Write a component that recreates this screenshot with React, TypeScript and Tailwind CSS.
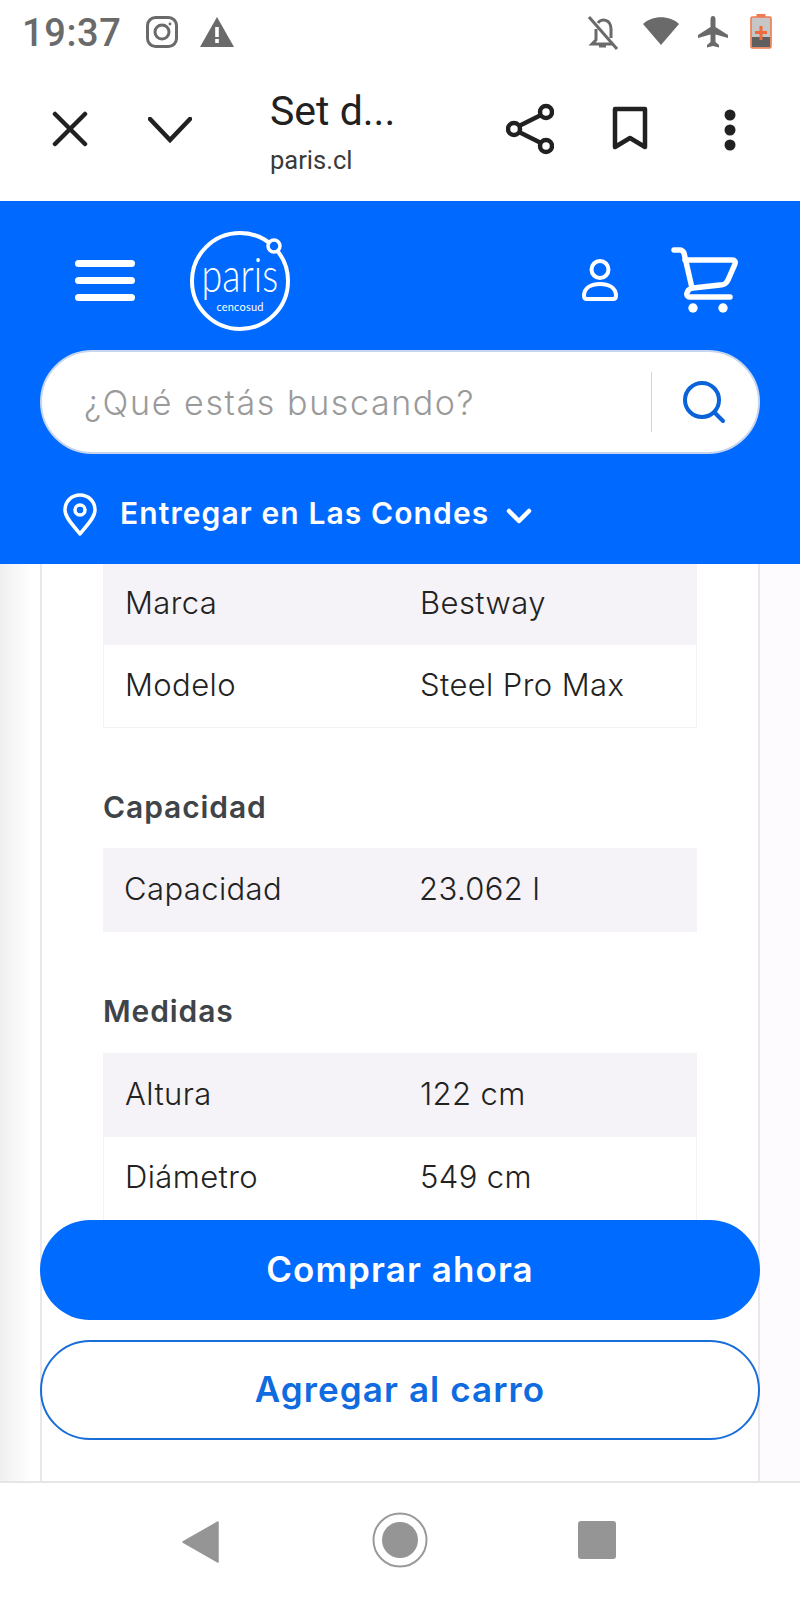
import React from "react";

const Mont = "font-['Inter','Liberation_Sans',sans-serif]";

function StatusBar() {
  return (
    <div className="h-[66px] flex items-center justify-between pl-[22px] pr-[28px] bg-white shrink-0">
      <div className="flex items-center">
        <span className="font-['Roboto',sans-serif] text-[38px] leading-none font-medium text-[#6a6a6a] tracking-[0.6px]">19:37</span>
        <svg className="ml-[24px] mt-[-3px]" width="34" height="34" viewBox="0 0 34 34" fill="none" stroke="#6a6a6a" strokeWidth="3">
          <rect x="2.5" y="2.5" width="29" height="29" rx="8" />
          <circle cx="17" cy="17" r="7" />
          <circle cx="25" cy="9" r="1.4" fill="#6a6a6a" stroke="none" />
        </svg>
        <svg className="ml-[20px] mt-[-3px]" width="36" height="32" viewBox="0 0 36 32">
          <path d="M18 1 L35 31 H1 Z" fill="#6a6a6a" />
          <rect x="16.2" y="11" width="3.6" height="10" fill="#fff" />
          <rect x="16.2" y="23" width="3.6" height="4" fill="#fff" />
        </svg>
      </div>
      <div className="flex items-center">
        <svg className="mt-[-1px]" width="34" height="36" viewBox="0 0 34 36" fill="none" stroke="#6a6a6a" strokeWidth="3">
          <path d="M10 14 V25 L6 29 H27" />
          <path d="M12 8 C15 3 25 4 25 14 V23" />
          <path d="M13 31 H20" />
          <path d="M3 2 L31 34" strokeWidth="3" />
        </svg>
        <svg className="ml-[22px] mt-[-6px]" width="38" height="32" viewBox="0 0 38 32">
          <path d="M1 10 C10 1 28 1 37 10 L19 31 Z" fill="#6a6a6a" />
        </svg>
        <svg className="ml-[17px] mt-[-1px]" width="32" height="34" viewBox="0 0 32 34">
          <path d="M16 0 C18 0 18.5 2 18.5 4 V11 L31 19 V22 L18.5 18.5 V26 L22 29 V31.5 L16 30 L10 31.5 V29 L13.5 26 V18.5 L1 22 V19 L13.5 11 V4 C13.5 2 14 0 16 0 Z" fill="#6a6a6a" />
        </svg>
        <svg className="ml-[21px] mt-[-5px]" width="22" height="36" viewBox="0 0 22 36">
          <rect x="1" y="4" width="20" height="31" rx="1.5" fill="#c6c6c6" stroke="#ef7a50" strokeWidth="1.6" />
          <rect x="6.5" y="1" width="9" height="3" fill="#ef7a50" />
          <rect x="2" y="24" width="18" height="10" fill="#5f5f5f" />
          <path d="M11 13 V27 M5 19.5 H17" stroke="#ef6a3c" strokeWidth="3" />
        </svg>
      </div>
    </div>
  );
}

function Toolbar() {
  return (
    <div className="h-[135px] flex items-center bg-white shrink-0 relative">
      <svg className="ml-[52px] mt-[-9px]" width="36" height="36" viewBox="0 0 36 36" stroke="#212121" strokeWidth="4.5" strokeLinecap="round">
        <path d="M3 3 L33 33 M33 3 L3 33" />
      </svg>
      <svg className="ml-[60px] mt-[-8px]" width="44" height="26" viewBox="0 0 44 26" fill="none" stroke="#212121" strokeWidth="4.5" strokeLinecap="round">
        <path d="M2 2 L22 23 L42 2" />
      </svg>
      <div className="ml-[78px] mt-[-6px] flex flex-col font-['Roboto',sans-serif] text-[#212121]">
        <span className="text-[41px] leading-[46px]">Set d...</span>
        <span className="text-[25.5px] leading-[28px] mt-[12px] text-[#3a3a3a]">paris.cl</span>
      </div>
      <svg className="absolute left-[506px] top-[37px]" width="48" height="52" viewBox="0 0 48 52" fill="none" stroke="#212121" strokeWidth="4.5">
        <circle cx="40" cy="9" r="6" />
        <circle cx="8" cy="26" r="6" />
        <circle cx="40" cy="43" r="6" />
        <path d="M13 23 L35 12 M13 29 L35 40" />
      </svg>
      <svg className="absolute left-[612px] top-[40px]" width="36" height="46" viewBox="0 0 36 46" fill="none" stroke="#212121" strokeWidth="4.5">
        <path d="M3 3 H33 V41 L18 32 L3 41 Z" strokeLinejoin="round" />
      </svg>
      <svg className="absolute left-[722px] top-[43px]" width="16" height="42" viewBox="0 0 16 42" fill="#212121">
        <circle cx="8" cy="6" r="5.5" />
        <circle cx="8" cy="21" r="5.5" />
        <circle cx="8" cy="36" r="5.5" />
      </svg>
    </div>
  );
}

function Logo() {
  return (
    <div className="relative w-[104px] h-[104px] text-white">
      <svg className="absolute inset-0" width="104" height="104" viewBox="0 0 104 104" fill="none" stroke="#fff">
        <circle cx="52" cy="52" r="48" strokeWidth="4" />
        <circle cx="86" cy="17" r="6" strokeWidth="3.5" fill="#0069ff" />
      </svg>
      <div className="absolute inset-0 flex flex-col items-center font-['Lato',sans-serif]">
        <span className="text-[47px] font-light leading-[46px] mt-[22px] scale-x-[0.8]">paris</span>
        <span className="text-[11px] leading-[12px] mt-[4px] tracking-[0.2px]">cencosud</span>
      </div>
    </div>
  );
}

function Header() {
  return (
    <div className={`h-[363px] bg-[#0069ff] shrink-0 flex flex-col ${Mont}`}>
      <div className="h-[149px] flex items-start relative">
        <div className="ml-[75px] mt-[59px] flex flex-col gap-[10px]">
          <div className="w-[60px] h-[7px] rounded-full bg-white" />
          <div className="w-[60px] h-[7px] rounded-full bg-white" />
          <div className="w-[60px] h-[7px] rounded-full bg-white" />
        </div>
        <div className="ml-[53px] mt-[28px]"><Logo /></div>
        <svg className="absolute left-[580px] top-[58px]" width="40" height="44" viewBox="0 0 40 44" fill="none" stroke="#fff" strokeWidth="4">
          <circle cx="20" cy="10.5" r="8.5" />
          <path d="M4 37 C4 28 12 25 20 25 C28 25 36 28 36 37 C36 39 35 40 33 40 H7 C5 40 4 39 4 37 Z" />
        </svg>
        <svg className="absolute left-[670px] top-[45px]" width="70" height="70" viewBox="0 0 70 70" fill="none" stroke="#fff" strokeWidth="5.5" strokeLinecap="round" strokeLinejoin="round">
          <path d="M4 4 H10 C12 4 13 5 14 7 L22 42 C16 44 15 51 20 51 H60" />
          <path d="M15 14 H62 C65 14 66 16 65 18 L58 34 C56 38 54 39 50 39 L23 42" />
          <circle cx="23" cy="62" r="4.7" fill="#fff" stroke="none" />
          <circle cx="53" cy="62" r="4.7" fill="#fff" stroke="none" />
        </svg>
      </div>
      <div className="mx-[40px] h-[104px] rounded-full bg-white border-2 border-[#c7d6ee] flex items-center">
        <span className="ml-[42px] text-[34px] font-light text-[#9a9a9a] flex-1 tracking-[1.6px]">¿Qué estás buscando?</span>
        <div className="w-[1px] h-[60px] bg-[#d4d4d4]" />
        <svg className="ml-[30px] mr-[32px]" width="44" height="44" viewBox="0 0 44 44" fill="none" stroke="#0a63d8" strokeWidth="4" strokeLinecap="round">
          <circle cx="20" cy="20" r="17" />
          <path d="M33 33 L41 41" />
        </svg>
      </div>
      <div className="flex items-center mt-[39px]">
        <svg className="ml-[62px]" width="36" height="44" viewBox="0 0 36 44" fill="none" stroke="#fff" strokeWidth="3.5" strokeLinejoin="round">
          <path d="M18 41 C12 33 3 25 3 17 C3 8 10 2 18 2 C26 2 33 8 33 17 C33 25 24 33 18 41 Z" />
          <circle cx="18" cy="17" r="5" />
        </svg>
        <span className="ml-[22px] mt-[-5px] text-[30px] font-semibold text-white leading-none tracking-[1.1px]">Entregar en Las Condes</span>
        <svg className="ml-[17px] mt-[2px]" width="26" height="18" viewBox="0 0 26 18" fill="none" stroke="#fff" strokeWidth="4.5" strokeLinecap="round" strokeLinejoin="round">
          <path d="M3 4 L13 14 L23 4" />
        </svg>
      </div>
    </div>
  );
}

function Row({ k, v, shade, h }: { k: string; v: string; shade?: boolean; h: string }) {
  return (
    <div className={`flex items-center pb-[2px] ${h} ${shade ? "bg-[#f5f3f7]" : "bg-white"}`}>
      <span className="w-[316px] pl-[21px] shrink-0">{k}</span>
      <span>{v}</span>
    </div>
  );
}

function Content() {
  return (
    <div className={`flex-1 relative overflow-hidden flex ${Mont}`}>
      <div className="w-[40px] bg-gradient-to-r from-[#efefef] to-white to-80% shrink-0" />
      <div className="flex-1 bg-white border-x-2 border-[#e8e7ec] px-[61px] text-[31px] font-[350] tracking-[0.4px] text-[#222]">
        <div className="border border-t-0 border-[#f3f2f5]">
          <Row k="Marca" v="Bestway" shade h="h-[81px]" />
          <Row k="Modelo" v="Steel Pro Max" h="h-[82px]" />
        </div>
        <div className="mt-[59px] h-[40px] flex items-center font-semibold text-[#3f4448] text-[30px] tracking-[0.9px]">Capacidad</div>
        <div className="mt-[21px]">
          <Row k="Capacidad" v="23.062 l" shade h="h-[84px]" />
        </div>
        <div className="mt-[59px] h-[40px] flex items-center font-semibold text-[#3f4448] text-[30px] tracking-[0.9px]">Medidas</div>
        <div className="mt-[22px] border border-t-0 border-[#f3f2f5]">
          <Row k="Altura" v="122 cm" shade h="h-[84px]" />
          <Row k="Diámetro" v="549 cm" h="h-[83px]" />
        </div>
      </div>
      <div className="w-[40px] bg-[#fdfbfe] shrink-0" />
      <div className="absolute left-[40px] right-[40px] top-[656px] flex flex-col gap-[20px]">
        <div className="h-[100px] pb-[1px] rounded-full bg-[#006bff] text-white text-[35px] font-semibold tracking-[1.1px] flex items-center justify-center">Comprar ahora</div>
        <div className="h-[100px] pb-[1px] rounded-full bg-white border-2 border-[#1a6ed8] text-[#0f6be0] text-[35px] font-semibold tracking-[1.1px] flex items-center justify-center">Agregar al carro</div>
      </div>
    </div>
  );
}

function NavBar() {
  return (
    <div className="h-[119px] bg-white border-t-2 border-[#e6e6e8] shrink-0 relative flex items-center justify-center">
      <svg className="absolute left-[182px] top-[38px]" width="38" height="42" viewBox="0 0 38 42" fill="#959595">
        <path d="M36 1 V41 L1 21 Z" stroke="#959595" strokeWidth="1.5" strokeLinejoin="round" />
      </svg>
      <svg className="absolute left-[372px] top-[29px]" width="56" height="56" viewBox="0 0 56 56">
        <circle cx="28" cy="28" r="26.5" fill="none" stroke="#9a9a9a" strokeWidth="2" />
        <circle cx="28" cy="28" r="18" fill="#959595" />
      </svg>
      <div className="absolute left-[578px] top-[38px] w-[38px] h-[38px] rounded-[3px] bg-[#959595]" />
    </div>
  );
}

export default function App() {
  return (
    <div className="w-[800px] h-[1600px] flex flex-col overflow-hidden bg-white">
      <StatusBar />
      <Toolbar />
      <Header />
      <Content />
      <NavBar />
    </div>
  );
}
